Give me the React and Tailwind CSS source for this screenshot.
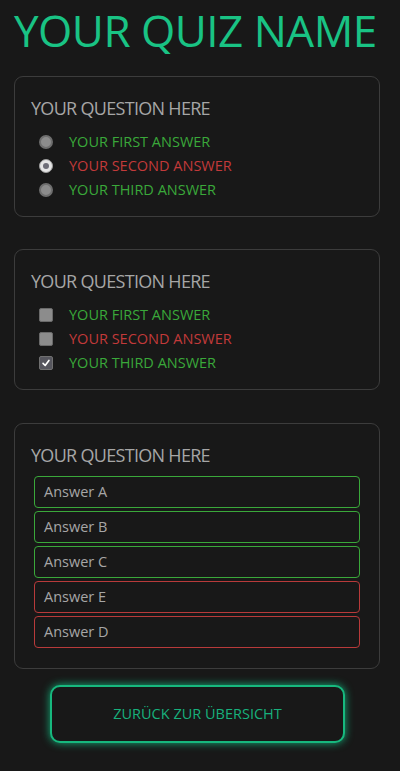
import React from 'react';

const GREEN = 'text-[#3aa83a]';
const RED = 'text-[#c23a3a]';

function Radio({ checked }) {
    if (checked) {
        return (
            <span className="w-[14px] h-[14px] rounded-full bg-[#e6e6e6] border border-[#9a9a9a] flex items-center justify-center">
                <span className="w-[6px] h-[6px] rounded-full bg-[#6e6e78]" />
            </span>
        );
    }
    return <span className="w-[14px] h-[14px] rounded-full bg-[#8c8c8c] border-2 border-[#6e6e6e]" />;
}

function Checkbox({ checked }) {
    if (checked) {
        return (
            <span className="w-[14px] h-[14px] rounded-[2px] bg-[#56565e] border border-[#707070] flex items-center justify-center">
                <svg viewBox="0 0 12 12" className="w-[10px] h-[10px]">
                    <path d="M2.5 6.5 L5 9 L9.5 3" fill="none" stroke="#fff" strokeWidth="2" strokeLinecap="round" strokeLinejoin="round" />
                </svg>
            </span>
        );
    }
    return <span className="w-[14px] h-[14px] rounded-[2px] bg-[#8c8c8c] border border-[#6a6a6a]" />;
}

const answers = [
    { text: 'YOUR FIRST ANSWER', color: GREEN },
    { text: 'YOUR SECOND ANSWER', color: RED },
    { text: 'YOUR THIRD ANSWER', color: GREEN },
];

const textAnswers = [
    { text: 'Answer A', ok: true },
    { text: 'Answer B', ok: true },
    { text: 'Answer C', ok: true },
    { text: 'Answer E', ok: false },
    { text: 'Answer D', ok: false },
];

function Card({ children, className = '' }) {
    return (
        <div className={`ml-[14px] w-[366px] border border-[#3c3c3c] rounded-[9px] pl-[16px] pr-[19px] ${className}`}>
            {children}
        </div>
    );
}

function Question() {
    return <h2 className="text-[18px] leading-[24px] text-[#a6a6a6] tracking-[-0.7px]">YOUR QUESTION HERE</h2>;
}

export default function App() {
    return (
        <div className="min-h-[771px] w-[400px] bg-[#181818] font-['Open_Sans',sans-serif] pb-[28px]">
            {/* Title */}
            <h1 className="text-[44px] leading-[60px] text-[#19c384] pl-[14px] tracking-[-0.5px] whitespace-nowrap">
                YOUR QUIZ NAME
            </h1>

            {/* Radio question */}
            <Card className="mt-[16px] pt-[19px] pb-[14px]">
                <Question />
                <div className="mt-[10px] flex flex-col">
                    {answers.map((a, i) => (
                        <label key={i} className="flex items-center h-[24px] pl-[8px]">
                            <Radio checked={i === 1} />
                            <span className={`ml-[16px] text-[14.5px] ${a.color}`}>{a.text}</span>
                        </label>
                    ))}
                </div>
            </Card>

            {/* Checkbox question */}
            <Card className="mt-[32px] pt-[19px] pb-[14px]">
                <Question />
                <div className="mt-[10px] flex flex-col">
                    {answers.map((a, i) => (
                        <label key={i} className="flex items-center h-[24px] pl-[8px]">
                            <Checkbox checked={i === 2} />
                            <span className={`ml-[16px] text-[14.5px] ${a.color}`}>{a.text}</span>
                        </label>
                    ))}
                </div>
            </Card>

            {/* Text answers */}
            <Card className="mt-[33px] pt-[19px] pb-[20px]">
                <Question />
                <div className="mt-[9px] flex flex-col gap-[3px] pl-[3px]">
                    {textAnswers.map((a, i) => (
                        <div
                            key={i}
                            className={`h-[32px] rounded-[4px] border-[1.5px] flex items-center px-[9px] text-[14.5px] text-[#a6a6a6] ${a.ok ? 'border-[#3aa83a]' : 'border-[#b83a3a]'}`}
                        >
                            {a.text}
                        </div>
                    ))}
                </div>
            </Card>

            {/* Back button */}
            <div className="mt-[16px] flex justify-center pr-[5px]">
                <button className="w-[295px] h-[58px] rounded-[10px] border-2 border-[#17b87e] shadow-[0_0_8px_#12b07a] text-[#17b07c] text-[14.5px] bg-[#181818]">
                    ZURÜCK ZUR ÜBERSICHT
                </button>
            </div>
        </div>
    );
}
